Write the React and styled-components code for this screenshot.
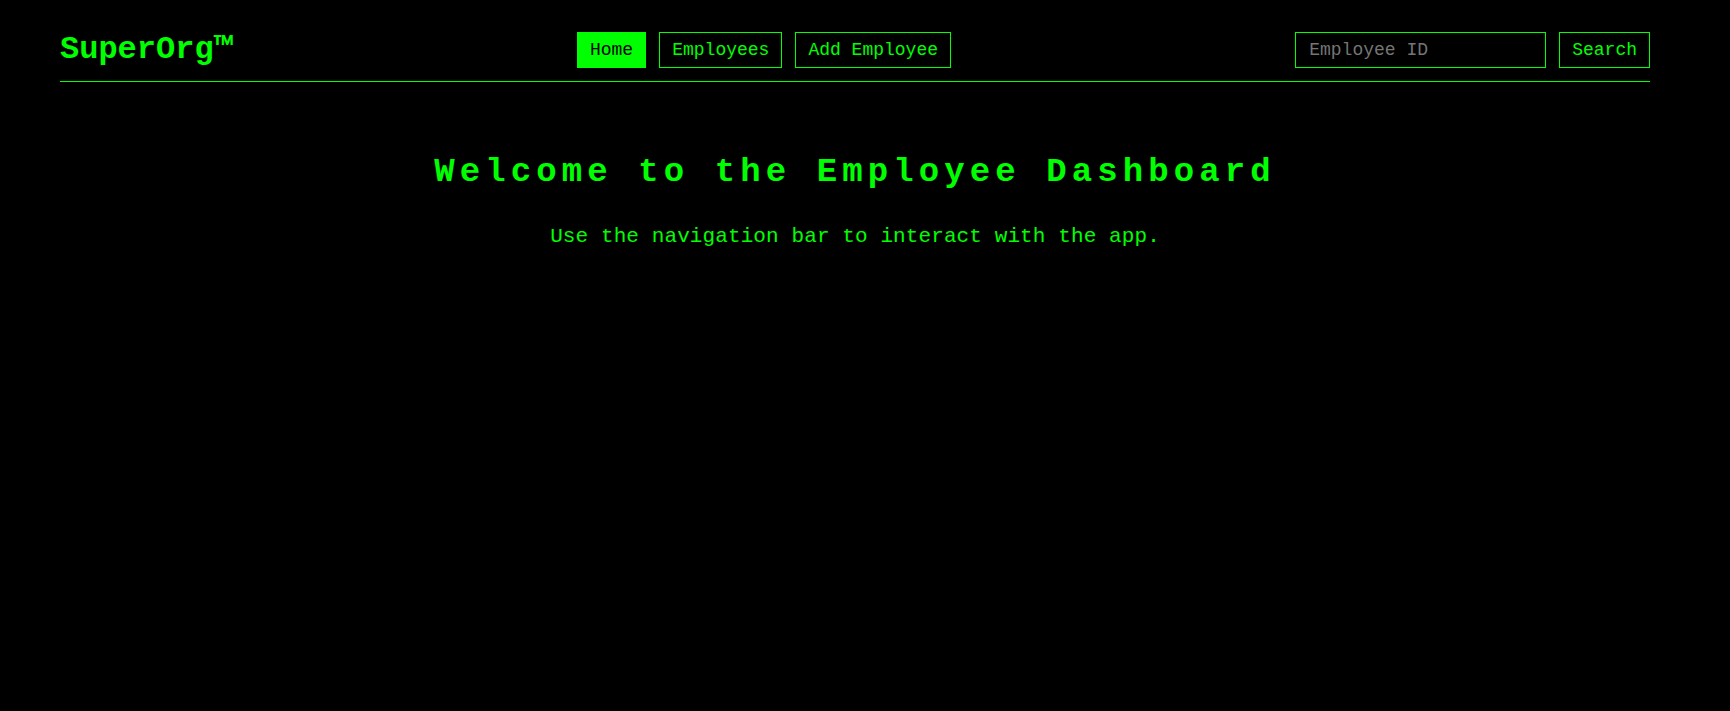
import React from "react";
import styled, { createGlobalStyle } from "styled-components";

const GREEN = "#00ff00";
const MONO = '"Courier New", "Nimbus Mono PS", "Nimbus Mono L", FreeMono, Courier, "Liberation Mono", monospace';

const Global = createGlobalStyle`
  html, body {
    margin: 0;
    padding: 0;
    background: #000;
    color: ${GREEN};
    font-family: ${MONO};
  }
  * { box-sizing: border-box; }
`;

const Page = styled.div`
  min-height: 711px;
  background: #000;
  padding: 31px 80px 0 60px;
`;

const Header = styled.header`
  display: flex;
  align-items: center;
  justify-content: space-between;
  padding-bottom: 13px;
  border-bottom: 1px solid ${GREEN};
`;

const Logo = styled.div`
  font-family: ${MONO};
  font-weight: bold;
  font-size: 32px;
  color: ${GREEN};
`;

const Nav = styled.nav`
  display: flex;
  gap: 13px;
`;

const NavButton = styled.button`
  font-family: ${MONO};
  font-size: 18px;
  line-height: 20px;
  height: 36px;
  padding: 0 12px;
  border: 1px solid ${GREEN};
  background: ${(p) => (p.$active ? GREEN : "#000")};
  color: ${(p) => (p.$active ? "#000" : GREEN)};
  cursor: pointer;
`;

const SearchBox = styled.form`
  display: flex;
  gap: 13px;
`;

const Input = styled.input`
  font-family: ${MONO};
  font-size: 18px;
  width: 251px;
  height: 36px;
  padding: 0 13px;
  border: 1px solid ${GREEN};
  background: #000;
  color: ${GREEN};
  outline: none;
  &::placeholder {
    color: #757575;
  }
`;

const Main = styled.main`
  display: flex;
  flex-direction: column;
  align-items: center;
  padding-top: 71px;
`;

const Title = styled.h1`
  margin: 0;
  font-family: ${MONO};
  font-weight: bold;
  font-size: 34px;
  letter-spacing: 5.1px;
  line-height: normal;
  color: ${GREEN};
`;

const Subtitle = styled.p`
  margin: 34px 0 0;
  font-family: ${MONO};
  font-size: 21px;
  letter-spacing: 0.1px;
  line-height: normal;
  color: ${GREEN};
`;

export default function App() {
  return (
    <>
      <Global />
      <Page>
        <Header>
          <Logo>SuperOrg™</Logo>
          <Nav>
            <NavButton $active>Home</NavButton>
            <NavButton>Employees</NavButton>
            <NavButton>Add Employee</NavButton>
          </Nav>
          <SearchBox onSubmit={(e) => e.preventDefault()}>
            <Input placeholder="Employee ID" />
            <NavButton type="submit">Search</NavButton>
          </SearchBox>
        </Header>
        <Main>
          <Title>Welcome to the Employee Dashboard</Title>
          <Subtitle>Use the navigation bar to interact with the app.</Subtitle>
        </Main>
      </Page>
    </>
  );
}
